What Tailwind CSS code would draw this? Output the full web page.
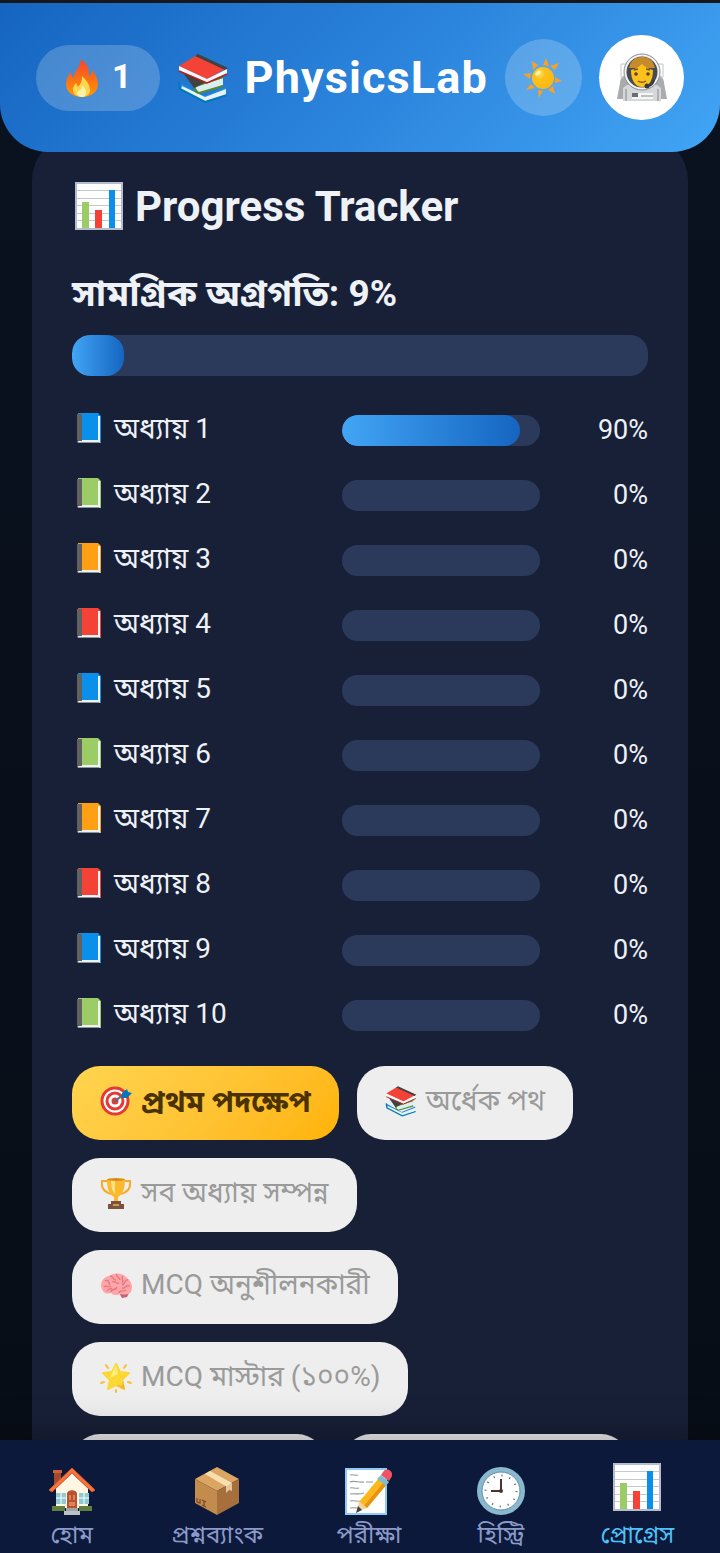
<!DOCTYPE html>
<html lang="bn">
<head>
    <meta charset="UTF-8" />
    <meta name="viewport" content="width=device-width, initial-scale=1.0" />
    <title>PhysicsLab - Progress Tracker</title>
    <script src="https://cdn.jsdelivr.net/npm/@tailwindcss/browser@4"></script>
</head>

<body class="flex h-screen flex-col overflow-hidden border-t-3 border-[#15171a] bg-linear-to-b from-[#0a1220] to-[#070d16] font-[Roboto,'Noto_Sans_Bengali','Noto_Sans',sans-serif] text-[#eef1f6]">

    <!-- Icons -->
    <svg class="absolute size-0" aria-hidden="true">
        <defs>
            <linearGradient id="flame" x1="0" y1="0" x2="0" y2="1">
                <stop offset="0" stop-color="#f4442e" /><stop offset="1" stop-color="#ff9800" />
            </linearGradient>
            <radialGradient id="sunFill" cx=".35" cy=".3" r=".8">
                <stop offset="0" stop-color="#ffe36b" /><stop offset=".3" stop-color="#fcc21b" /><stop offset="1" stop-color="#f9b50f" />
            </radialGradient>
        </defs>
        <symbol id="i-fire" viewBox="0 0 36 40">
            <path fill="url(#flame)" d="M17 1c4 3 9 8 8 17 2-1 3-3 3-6 4 5 6 9 6 14 0 8-7 13-16 13S2 34 2 26c0-5 2-9 5-12 0 3 1 5 3 6C9 14 17 9 17 1z" />
            <path fill="#ffd54f" d="M18 18c5 5 8 9 8 14 0 4-3 7-8 7s-9-3-9-7c0-3 1-5 3-7l2 4c3-3 4-6 4-11z" />
            <path fill="#fff3a8" d="M18 27c3 3 4 5 4 8 0 2-2 4-4 4s-5-2-5-4l2-3 1 1c1-2 2-3 2-6z" />
        </symbol>
        <symbol id="i-books" viewBox="0 0 52 50">
            <path fill="#1e88e5" d="M2 29l25 14 22-9v3L28 47 3 33z" />
            <path fill="#e7f3f7" d="M5 33l23 11 21-8v6L28 49 4 36z" />
            <path fill="none" stroke="#0277bd" stroke-width="2" d="M2 29l1 7 25 13 22-7" />
            <path fill="#7cb342" d="M13 28l31-4v4L19 36z" />
            <path fill="#dcedf0" d="M18 34l28-9v7l-24 8z" />
            <path fill="none" stroke="#558b2f" stroke-width="2" d="M46 24l-27 9c-3 3-1 6 3 7l24-7" />
            <path fill="#424242" d="M4 17l25 12-12 6z" />
            <path fill="#f44336" d="M2 13L20 2l30 13-20 11z" />
            <path fill="#424242" d="M18 3l3-2 30 14-3 2z" />
            <path fill="#f5f7f8" d="M2 13l28 13 20-10v5L30 30 2 18z" />
            <path fill="none" stroke="#b71c1c" stroke-width="1.5" d="M2 18l28 12 20-9" />
        </symbol>
        <symbol id="i-sun" viewBox="0 0 40 40">
            <path fill="#f9a026" d="M23 0l3 8-6-1zM36 5l-4 7-5-4zM39 23l-7 2v-6zM32 36l-7-4 5-4zM16 40l-1-8 5 1zM3 32l5-6 4 4zM0 16l8-1-1 6zM9 3l6 4-5 5z" />
            <circle cx="20" cy="20" r="11" fill="url(#sunFill)" />
            <ellipse cx="15" cy="15" rx="3" ry="2" fill="#fff2a5" transform="rotate(-40 15 15)" />
        </symbol>
        <symbol id="i-astronaut" viewBox="0 0 50 50">
            <path fill="#a9abac" d="M3 30c0-5 4-9 9-9h26c5 0 9 4 9 9l3 16H0z" />
            <path fill="#d5d8d9" d="M6 48V35c4-4 9-5 19-5s15 1 19 5v13z" />
            <path fill="none" stroke="#84888a" d="M9 36v12M41 36v12" />
            <path fill="none" stroke="#c3c6c7" d="M4 11h6v13H4zM40 11h6v13h-6z" />
            <circle cx="25" cy="19" r="18" fill="#f1f2f3" stroke="#8a8e90" />
            <circle cx="25" cy="19" r="15.500" fill="#464b50" />
            <path fill="#c58b2d" d="M12 15C14 6 19 4 25 4s11 2 13 11z" />
            <path fill="#fcc21b" d="M14 17c5-1 8-3 11-6 3 3 6 5 11 6 0 10-4 17-11 17s-11-7-11-17z" />
            <g fill="#5c4020"><circle cx="19" cy="21" r="1.800" /><circle cx="31" cy="21" r="1.800" /></g>
            <path fill="none" stroke="#795424" stroke-width="1.500" d="M17 17l4-1M29 16l4 1M21 28c3 2 5 2 8 0" />
            <path fill="none" stroke="#36393b" stroke-width="2" d="M37 27c-1 4-3 6-6 6" />
            <circle cx="30" cy="33" r="2.500" fill="#36393b" />
            <path fill="#f5f5f5" d="M15 40h21v6H15z" /><path fill="#686d70" d="M15 40h6v4h-6z" /><path stroke="#84888a" d="M24 43h12" />
        </symbol>
        <symbol id="i-chart" viewBox="0 0 48 48">
            <path fill="#fff" stroke="#b4bccd" stroke-width="2" d="M1 1h46v46H1z" />
            <path stroke="#c5c9cf" d="M2 8.500h44M2 16.500h44M2 23.500h44M2 31.500h44M2 38.500h44" />
            <path fill="#9ccc65" d="M7 20h7v26H7z" /><path fill="#f44336" d="M20 28h7v18h-7z" /><path fill="#0a8fea" d="M34 8h6v38h-6z" />
        </symbol>
        <symbol id="i-book" viewBox="0 0 26 31">
            <path fill="#d2d7d9" d="M2 3h23v27H2z" />
            <path fill="currentColor" d="M2 0h20l3 3v27l-2-1V27H2z" />
            <path fill="#eef2f3" d="M22 3h2v26H3l-1-2h20z" />
            <path fill="#616161" d="M1 1h5v27H2l-1-1z" />
            <path stroke="#8c9599" d="M1 28.500l2 1h20" fill="none" />
        </symbol>
        <symbol id="i-target" viewBox="0 0 32 32">
            <circle cx="15" cy="16" r="13" fill="#fff" stroke="#e53935" stroke-width="3" />
            <circle cx="15" cy="16" r="8" fill="#fff" stroke="#e53935" stroke-width="3" />
            <circle cx="15" cy="16" r="3.500" fill="#e53935" />
            <path stroke="#546e7a" stroke-width="2" d="M14 17l10-8" />
            <path fill="#0277bd" d="M22 8l5-4 1 3 4 1-5 5h-5z" />
        </symbol>
        <symbol id="i-trophy" viewBox="0 0 32 32">
            <path fill="none" stroke="#f9a825" stroke-width="2" d="M8 4H2c-1 7 2 11 9 13M24 4h6c1 7-2 11-9 13" />
            <path fill="#fdb92c" d="M7 2h18c0 10-2 15-7 18v5h-4v-5C9 17 7 12 7 2z" />
            <path fill="#ffe182" d="M11 3h4v14c-3-3-4-8-4-14z" /><ellipse cx="16" cy="2.500" rx="9" ry="1.500" fill="#d98b16" />
            <path fill="#7d513f" d="M11 24h10v3h3v5H8v-5h3z" /><path fill="#c99c53" d="M13 27h6v2h-6z" />
        </symbol>
        <symbol id="i-brain" viewBox="0 0 32 32">
            <path fill="#c75f71" d="M18 22l9-1 2 3-2 4-5 1z" />
            <path fill="#ffa5a8" d="M1 17c0-5 3-9 8-10 6-4 14-3 18 2 5 3 6 9 4 14-3 3-7 3-11 2-3 2-7 1-9-1-5 2-9-1-10-7z" />
            <path fill="none" stroke="#e47580" stroke-width="1.300" d="M4 18c3-3 4 2 7-1M5 12c3-2 5 1 4 4M10 7c4 0 2 4 6 4M17 5c-2 3 3 3 3 6M23 7c-3 2 2 4-1 7M28 11c-4-1-2 4-6 5M30 17c-4-2-4 3-8 2M12 13c4-2 4 3 7 1M11 23c0-4 5-1 6-5M19 24c0-3 4-1 7-3M7 22c1-3 3-1 5-3" />
        </symbol>
        <symbol id="i-star" viewBox="0 0 32 32">
            <path fill="#fdd835" stroke="#fdd835" stroke-width="2" stroke-linejoin="round" d="M16 3l4 8 9 1-7 7 2 9-8-4-8 4 2-9-7-7 9-1z" />
            <path fill="#ffee78" d="M16 4l2 9-8 4 2-5z" /><path fill="#f4b42a" d="M23 19l2 10-9-5 6 1z" />
            <path fill="none" stroke="#fbc02d" stroke-width="2" stroke-linecap="round" d="M6 4l2 3M26 4l-2 3M1 22l3-1M31 22l-3-1M16 29v2" />
        </symbol>
        <symbol id="i-home" viewBox="0 0 48 48">
            <path fill="#a3492f" d="M6 4h7v17H6z" /><path fill="#c9623f" d="M5 3h9v3H5z" />
            <path fill="#fff7e4" d="M8 21L24 6l16 15v20H8z" />
            <path fill="#f4753e" stroke="#d9542b" d="M1 23L24 1l23 22-3 2L24 6 4 25z" />
            <path fill="#8fcbd0" d="M8 26h10v11H8zM31 26h10v11H31z" /><path stroke="#fff" d="M13 26v11M8 31h10M36 26v11M31 31h10" />
            <path fill="#62803d" d="M4 39h13v5H4zM31 39h13v5H31z" />
            <path fill="#b7532f" d="M19 41V27c0-5 10-5 10 0v14z" /><path fill="#df815a" d="M21 28h2v5h-2zM25 28h2v5h-2zM21 35h6v4h-6z" />
            <path fill="#9ea4a7" d="M18 41h12v3H18z" /><path fill="#bcc1c3" d="M16 44h16v4H16z" />
        </symbol>
        <symbol id="i-box" viewBox="0 0 48 48">
            <path fill="#dba663" d="M2 12L24 0l22 12-22 12z" /><path fill="#c38b4c" d="M2 12l22 12v24L2 36z" /><path fill="#a66f3b" d="M46 12L24 24v24l22-12z" />
            <path fill="#f9dfae" d="M12 7l5-3 22 12-5 4z" /><path fill="#e3c6a0" d="M33 20l6-4v8l-3-1-3 3z" />
            <path fill="none" stroke="#7b4c25" stroke-width="1.300" d="M4 31v4l3 1v-4M9 33l4 2M11 34v5M9 38l4 2" />
        </symbol>
        <symbol id="i-memo" viewBox="0 0 48 48">
            <path fill="#fff" stroke="#90caf9" stroke-width="2" d="M1 2h40v45H1z" />
            <path fill="none" stroke="#91989b" stroke-width="1.200" d="M5 8c3-1 5 1 8 0M5 15c4-2 9 1 14 0M21 15h7M5 21c3-1 5 1 9 0M5 27c5-1 8 1 14-1M5 34c4-1 8 1 12 0M5 41c5-1 9 1 15 0" />
            <path fill="#fbb91d" d="M34 11l8 6-20 24-8-6z" /><path fill="#e99111" d="M39 15l3 2-20 24-3-2z" />
            <path fill="#f4d39b" d="M14 34l8 7-10 4z" /><path fill="#424242" d="M13 39l4 4-6 3z" />
            <path fill="#82bdcd" d="M36 8l8 7-3 4-9-7z" /><path fill="#ef5366" d="M38 5c4-6 12 0 8 6l-2 3-8-6z" />
        </symbol>
        <symbol id="i-clock" viewBox="0 0 48 48">
            <circle cx="24" cy="24" r="21.500" fill="#fff" stroke="#8ab8cf" stroke-width="5" />
            <circle cx="24" cy="24" r="19" fill="none" stroke="#608fab" />
            <circle cx="24" cy="24" r="15.500" fill="none" stroke="#64777f" stroke-width="2" stroke-dasharray="1.200 6.916" />
            <path stroke="#4e342e" stroke-width="2" d="M24 12v13M14 24h11" /><circle cx="24" cy="24" r="2" fill="#4e342e" />
        </symbol>
    </svg>

    <header class="z-20 flex shrink-0 items-center justify-between rounded-b-[48px] bg-linear-135 from-[#1565c0] via-[#2a82da] to-[#42a5f5] px-9 py-8 text-white">
        <div class="flex h-[66px] items-center gap-3 rounded-full bg-white/20 px-7 text-[34px] leading-8 font-bold">
            <svg class="h-10 w-9"><use href="#i-fire" /></svg>
            <span class="pb-1">1</span>
        </div>
        <h1 class="flex items-center gap-4 text-[45px] font-bold tracking-wide">
            <svg class="h-[50px] w-[52px]"><use href="#i-books" /></svg>
            PhysicsLab
        </h1>
        <button type="button" aria-label="Theme" class="flex size-[77px] items-center justify-center rounded-full bg-white/20">
            <svg class="size-10"><use href="#i-sun" /></svg>
        </button>
        <button type="button" aria-label="Profile" class="flex size-[85px] items-center justify-center rounded-full bg-white">
            <svg class="size-[50px]"><use href="#i-astronaut" /></svg>
        </button>
    </header>

    <main class="-mt-4 min-h-0 flex-1 overflow-y-auto px-8 [scrollbar-width:none]">
        <section class="rounded-[44px] bg-[#182038] px-10 pt-[39px] pb-10">
            <h2 class="flex h-[62px] items-center gap-3 pl-[3px] text-[42px] font-bold">
                <svg class="size-12"><use href="#i-chart" /></svg>
                Progress Tracker
            </h2>
            <h3 class="mt-7 flex h-[58px] items-center text-[37px] font-bold">সামগ্রিক অগ্রগতি: 9%</h3>
            <div role="progressbar" aria-label="সামগ্রিক অগ্রগতি" aria-valuenow="9" class="mt-3 h-[41px] overflow-hidden rounded-[18px] bg-[#2b3a5a]">
                <div class="h-full rounded-[18px] bg-linear-to-r from-[#42a5f5] to-[#1565c0]" style="width: 9%"></div>
            </div>
            <ul id="chapterList" class="mt-[22px]"></ul>
            <ul id="badgeList" class="mt-[18px] flex flex-wrap gap-[18px]"></ul>
        </section>
    </main>

    <nav class="z-20 flex h-[113px] shrink-0 items-end justify-around bg-[#0c193b] px-[9px] text-[24px] text-[#8b9ac8] shadow-[0_-4px_36px_rgba(0,0,0,0.3)]">
        <a href="#home" class="flex flex-col items-center gap-1"><svg class="mx-0.5 size-12"><use href="#i-home" /></svg><span class="h-[34px] leading-8">হোম</span></a>
        <a href="#bank" class="flex flex-col items-center gap-1"><svg class="mx-0.5 size-12"><use href="#i-box" /></svg><span class="h-[34px] leading-8">প্রশ্নব্যাংক</span></a>
        <a href="#exam" class="flex flex-col items-center gap-1"><svg class="mx-0.5 size-12"><use href="#i-memo" /></svg><span class="h-[34px] leading-8">পরীক্ষা</span></a>
        <a href="#history" class="flex flex-col items-center gap-1"><svg class="mx-0.5 size-12"><use href="#i-clock" /></svg><span class="h-[34px] leading-8">হিস্ট্রি</span></a>
        <a href="#progress" aria-current="page" class="flex flex-col items-center gap-2 text-[#4fc3f7]"><svg class="mx-0.5 size-12"><use href="#i-chart" /></svg><span class="h-[34px] leading-8">প্রোগ্রেস</span></a>
    </nav>

    <script>
        const bookColors = ["text-[#0a8fea]", "text-[#9ccc65]", "text-[#ffa014]", "text-[#f44336]"];
        const progress = [90, 0, 0, 0, 0, 0, 0, 0, 0, 0];

        const badges = [
            { icon: "target", label: "প্রথম পদক্ষেপ", earned: true },
            { icon: "books", label: "অর্ধেক পথ" },
            { icon: "trophy", label: "সব অধ্যায় সম্পন্ন" },
            { icon: "brain", label: "MCQ অনুশীলনকারী" },
            { icon: "star", label: "MCQ মাস্টার (১০০%)" }
        ];

        document.getElementById("chapterList").innerHTML = progress.map((value, index) => `
            <li class="flex h-[65px] items-center text-[27px]">
                <span class="flex flex-1 items-center gap-3 pb-1 pl-1 text-[28px]">
                    <svg class="h-[31px] w-[26px] ${bookColors[index % 4]}"><use href="#i-book" /></svg>
                    <span>অধ্যায় ${index + 1}</span>
                </span>
                <span class="h-[31px] w-[198px] overflow-hidden rounded-full bg-[#2b3a5a]">
                    <span class="block h-full rounded-full bg-linear-to-r from-[#42a5f5] to-[#1565c0]" style="width: ${value}%"></span>
                </span>
                <span class="w-[108px] text-right">${value}%</span>
            </li>`).join("");

        // The last two badges are still empty slots
        document.getElementById("badgeList").innerHTML = badges.map((badge) => `
            <li class="flex h-[74px] items-center gap-[9px] rounded-[28px] px-7 pb-1 ${badge.earned
                ? "bg-linear-135 from-[#ffd54f] to-[#ffb300] text-[30px] font-bold text-[#4a3200]"
                : "bg-[#eeeeee] text-[28px] text-[#9a9a9a]"}">
                <svg class="size-8"><use href="#i-${badge.icon}" /></svg>
                <span>${badge.label}</span>
            </li>`).join("") + `
            <li class="h-[74px] w-[253px] rounded-[28px] bg-[#eeeeee]"></li>
            <li class="h-[74px] w-[286px] rounded-[28px] bg-[#eeeeee]"></li>`;
    </script>
</body>
</html>
